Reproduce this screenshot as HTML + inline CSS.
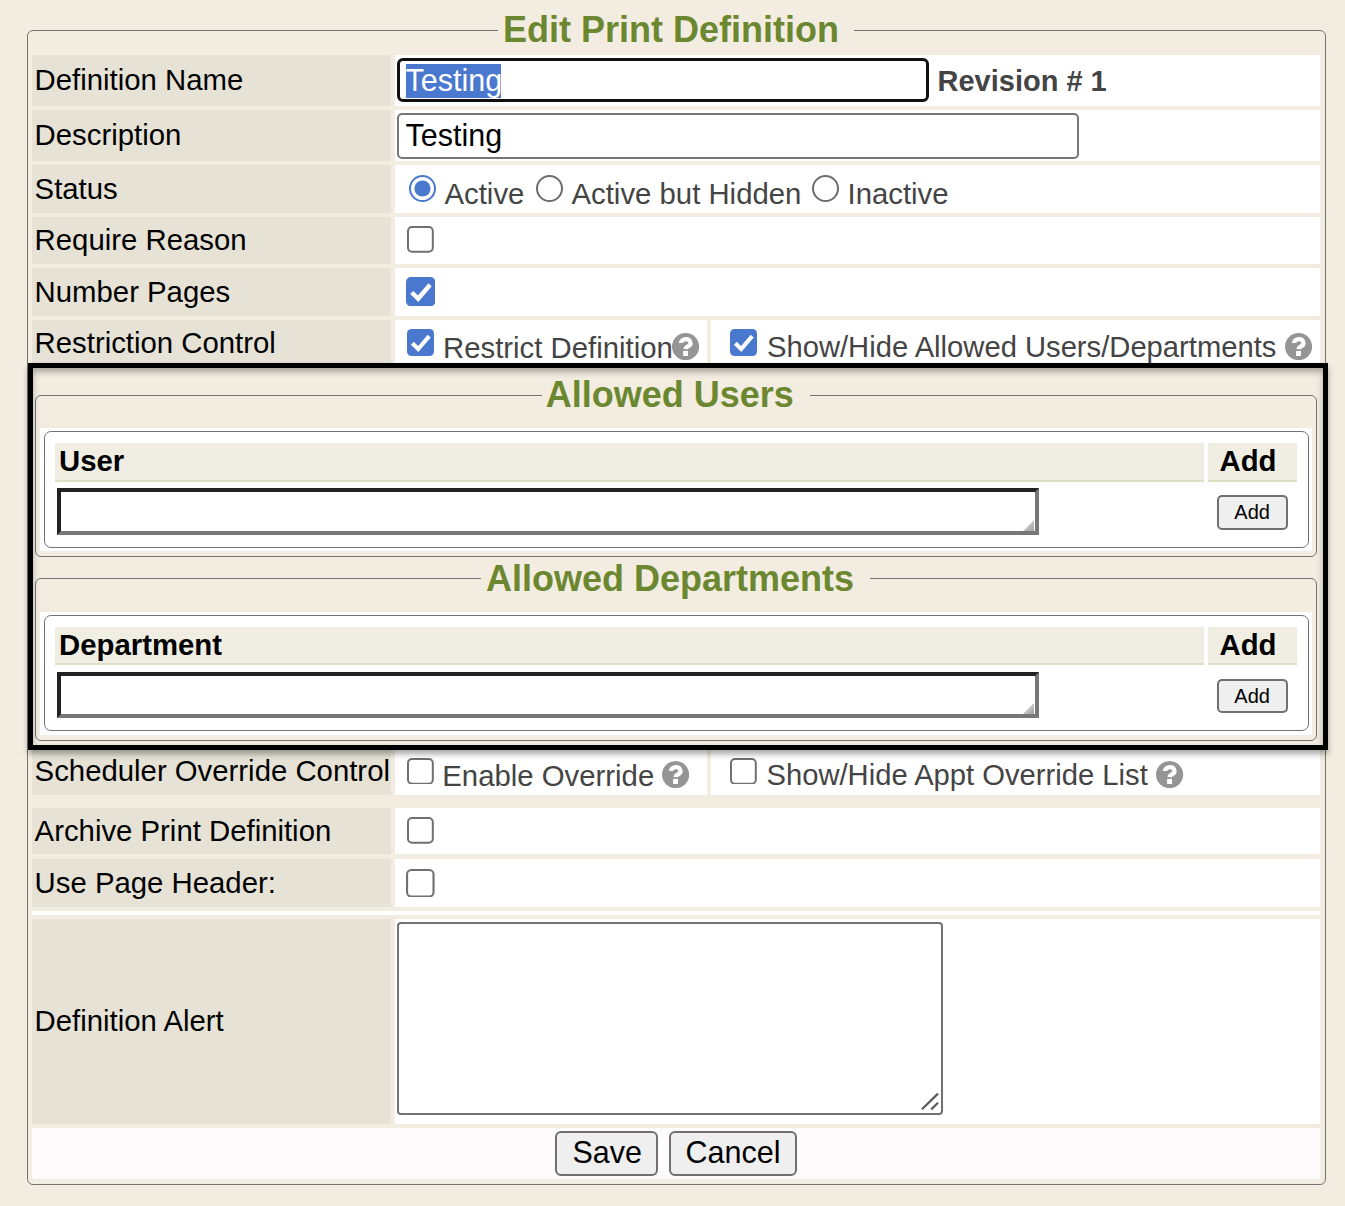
<!DOCTYPE html>
<html><head><meta charset="utf-8"><style>
html,body{margin:0;padding:0;width:1345px;height:1206px;overflow:hidden;background:#F3EDE1;}
body div, body span, body svg{position:absolute;box-sizing:content-box;}
.t{font-family:"Liberation Sans", sans-serif;white-space:nowrap;}
</style></head><body>
<div style="left:26.6px;top:29.6px;width:1297.20px;height:1153.20px;border:1.5px solid #727272;border-radius:6px;"></div>
<div style="left:497.8px;top:20px;width:356.20px;height:22.00px;background:#F3EDE1"></div>
<span class="t" style="left:503.00px;top:12.13px;font-size:36px;line-height:36px;font-weight:bold;color:#6B8730;">Edit Print Definition</span>
<div style="left:32px;top:55px;width:359.00px;height:51.00px;background:#E6E2D6"></div>
<span class="t" style="left:34.60px;top:65.17px;font-size:29.33px;line-height:29.33px;font-weight:normal;color:#000;">Definition Name</span>
<div style="left:32px;top:110px;width:359.00px;height:51.00px;background:#E6E2D6"></div>
<span class="t" style="left:34.60px;top:120.17px;font-size:29.33px;line-height:29.33px;font-weight:normal;color:#000;">Description</span>
<div style="left:32px;top:165px;width:359.00px;height:48.00px;background:#E6E2D6"></div>
<span class="t" style="left:34.60px;top:174.47px;font-size:29.33px;line-height:29.33px;font-weight:normal;color:#000;">Status</span>
<div style="left:32px;top:217px;width:359.00px;height:47.00px;background:#E6E2D6"></div>
<span class="t" style="left:34.60px;top:225.17px;font-size:29.33px;line-height:29.33px;font-weight:normal;color:#000;">Require Reason</span>
<div style="left:32px;top:268px;width:359.00px;height:48.00px;background:#E6E2D6"></div>
<span class="t" style="left:34.60px;top:277.17px;font-size:29.33px;line-height:29.33px;font-weight:normal;color:#000;">Number Pages</span>
<div style="left:32px;top:320px;width:359.00px;height:43.00px;background:#E6E2D6"></div>
<span class="t" style="left:34.60px;top:328.17px;font-size:29.33px;line-height:29.33px;font-weight:normal;color:#000;">Restriction Control</span>
<div style="left:395px;top:55px;width:925.00px;height:51.00px;background:#FFFFFF"></div>
<div style="left:395px;top:110px;width:925.00px;height:51.00px;background:#FFFFFF"></div>
<div style="left:395px;top:165px;width:925.00px;height:48.00px;background:#FFFFFF"></div>
<div style="left:395px;top:217px;width:925.00px;height:47.00px;background:#FFFFFF"></div>
<div style="left:395px;top:268px;width:925.00px;height:48.00px;background:#FFFFFF"></div>
<div style="left:395px;top:320px;width:312.00px;height:43.00px;background:#FFFFFF"></div>
<div style="left:711px;top:320px;width:609.00px;height:43.00px;background:#FFFFFF"></div>
<div style="left:397.2px;top:58px;width:525.8px;height:38.4px;border:3.7px solid #111;border-radius:6px;background:#fff"></div>
<div style="left:406px;top:64.2px;width:95.00px;height:33.80px;background:#4A78CE"></div>
<span class="t" style="left:405.50px;top:65.18px;font-size:30.5px;line-height:30.5px;font-weight:normal;color:#fff;">Testing</span>
<span class="t" style="left:937.50px;top:66.65px;font-size:29px;line-height:29px;font-weight:bold;color:#444444;">Revision # 1</span>
<div style="left:397px;top:113px;width:678px;height:42px;border:2px solid #767676;border-radius:5px;background:#fff"></div>
<span class="t" style="left:405.50px;top:120.48px;font-size:30.5px;line-height:30.5px;font-weight:normal;color:#000;">Testing</span>
<svg style="position:absolute;left:409px;top:175px" width="27" height="27" viewBox="0 0 27 27"><circle cx="13.5" cy="13.5" r="12.5" fill="#fff" stroke="#4A78CE" stroke-width="2"/><circle cx="13.5" cy="13.5" r="8.1" fill="#4A78CE"/></svg>
<span class="t" style="left:444.50px;top:178.77px;font-size:29.33px;line-height:29.33px;font-weight:normal;color:#444444;">Active</span>
<svg style="position:absolute;left:535.9px;top:175px" width="27" height="27" viewBox="0 0 27 27"><circle cx="13.5" cy="13.5" r="12.5" fill="#fff" stroke="#6d6d6d" stroke-width="2"/></svg>
<span class="t" style="left:571.50px;top:178.77px;font-size:29.33px;line-height:29.33px;font-weight:normal;color:#444444;">Active but Hidden</span>
<svg style="position:absolute;left:811.5px;top:175.3px" width="27" height="27" viewBox="0 0 27 27"><circle cx="13.5" cy="13.5" r="12.5" fill="#fff" stroke="#6d6d6d" stroke-width="2"/></svg>
<span class="t" style="left:847.50px;top:178.77px;font-size:29.33px;line-height:29.33px;font-weight:normal;color:#444444;">Inactive</span>
<svg style="position:absolute;left:407.3px;top:226px" width="26.8" height="26.8" viewBox="0 0 27 27"><rect x="1" y="1" width="25" height="25" rx="4" fill="#fff" stroke="#707070" stroke-width="2"/></svg>
<svg style="position:absolute;left:406px;top:277px" width="29.3" height="29.3" viewBox="0 0 27 27"><rect x="0" y="0" width="27" height="27" rx="4.5" fill="#4A78CE"/><path d="M5.3 14.3 L11.2 20 L22.2 7.2" fill="none" stroke="#fff" stroke-width="4.1"/></svg>
<svg style="position:absolute;left:407px;top:329px" width="27" height="27" viewBox="0 0 27 27"><rect x="0" y="0" width="27" height="27" rx="4.5" fill="#4A78CE"/><path d="M5.3 14.3 L11.2 20 L22.2 7.2" fill="none" stroke="#fff" stroke-width="4.1"/></svg>
<span class="t" style="left:443.00px;top:333.17px;font-size:29.33px;line-height:29.33px;font-weight:normal;color:#444444;">Restrict Definition</span>
<svg style="position:absolute;left:671.9px;top:332.9px" width="27.2" height="27.2" viewBox="-13.6 -13.6 27.2 27.2"><circle cx="0" cy="0" r="13.6" fill="#959595"/><path d="M-4.6 -3.6 C-4.4 -8.2 4.8 -9.4 4.9 -3.4 C4.9 0.2 0.2 -0.6 0.1 2.6" fill="none" stroke="#fff" stroke-width="4.4"/><rect x="-2.5" y="4.3" width="4.9" height="5.1" fill="#fff"/></svg>
<svg style="position:absolute;left:730px;top:329px" width="27" height="27" viewBox="0 0 27 27"><rect x="0" y="0" width="27" height="27" rx="4.5" fill="#4A78CE"/><path d="M5.3 14.3 L11.2 20 L22.2 7.2" fill="none" stroke="#fff" stroke-width="4.1"/></svg>
<span class="t" style="left:767.00px;top:332.58px;font-size:29.2px;line-height:29.2px;font-weight:normal;color:#444444;">Show/Hide Allowed Users/Departments</span>
<svg style="position:absolute;left:1285px;top:333px" width="27.2" height="27.2" viewBox="-13.6 -13.6 27.2 27.2"><circle cx="0" cy="0" r="13.6" fill="#959595"/><path d="M-4.6 -3.6 C-4.4 -8.2 4.8 -9.4 4.9 -3.4 C4.9 0.2 0.2 -0.6 0.1 2.6" fill="none" stroke="#fff" stroke-width="4.4"/><rect x="-2.5" y="4.3" width="4.9" height="5.1" fill="#fff"/></svg>
<div style="left:35.2px;top:394.55px;width:1280.10px;height:160.35px;border:1.5px solid #727272;border-radius:6px;"></div>
<div style="left:541.6px;top:385.3px;width:268.40px;height:20.00px;background:#F3EDE1"></div>
<span class="t" style="left:545.80px;top:376.83px;font-size:36px;line-height:36px;font-weight:bold;color:#6B8730;">Allowed Users</span>
<div style="left:40px;top:428.3px;width:1271.60px;height:123.10px;background:#fff"></div>
<div style="left:44.2px;top:430.8px;width:1262.90px;height:114.80px;border:1.5px solid #727272;border-radius:7px;"></div>
<div style="left:55px;top:443.2px;width:1149.00px;height:38.40px;background:#F0EEE2;border-bottom:2px solid #DEDEC4;box-sizing:border-box"></div>
<div style="left:1208.3px;top:443.2px;width:88.70px;height:38.40px;background:#F0EEE2;border-bottom:2px solid #DEDEC4;box-sizing:border-box"></div>
<span class="t" style="left:59.00px;top:446.17px;font-size:29.33px;line-height:29.33px;font-weight:bold;color:#000;">User</span>
<span class="t" style="left:1219.50px;top:446.47px;font-size:29.33px;line-height:29.33px;font-weight:bold;color:#000;">Add</span>
<div style="left:57px;top:488.00px;width:981.5px;height:46.5px;box-sizing:border-box;border:4px solid;border-color:#222 #777 #777 #222;background:#fff"></div>
<svg style="position:absolute;left:1023px;top:519.50px" width="11" height="11"><defs><linearGradient id="g395" x1="0" y1="0" x2="1" y2="1"><stop offset="0" stop-color="#e8e8e8"/><stop offset="1" stop-color="#a0a0a0"/></linearGradient></defs><path d="M11 0 L11 11 L0 11 Z" fill="url(#g395)"/></svg>
<div style="left:1217px;top:495.00px;width:70.5px;height:34.5px;box-sizing:border-box;border:2px solid #707070;border-radius:5px;background:#EFEFEF"></div>
<span class="t" style="left:1234.30px;top:501.87px;font-size:20px;line-height:20px;font-weight:normal;color:#000;">Add</span>
<div style="left:35.2px;top:578.25px;width:1280.10px;height:160.35px;border:1.5px solid #727272;border-radius:6px;"></div>
<div style="left:481.3px;top:569.0px;width:389.20px;height:20.00px;background:#F3EDE1"></div>
<span class="t" style="left:486.00px;top:560.53px;font-size:36px;line-height:36px;font-weight:bold;color:#6B8730;">Allowed Departments</span>
<div style="left:40px;top:612.0px;width:1271.60px;height:123.10px;background:#fff"></div>
<div style="left:44.2px;top:614.5px;width:1262.90px;height:114.80px;border:1.5px solid #727272;border-radius:7px;"></div>
<div style="left:55px;top:626.9px;width:1149.00px;height:38.40px;background:#F0EEE2;border-bottom:2px solid #DEDEC4;box-sizing:border-box"></div>
<div style="left:1208.3px;top:626.9px;width:88.70px;height:38.40px;background:#F0EEE2;border-bottom:2px solid #DEDEC4;box-sizing:border-box"></div>
<span class="t" style="left:59.00px;top:629.87px;font-size:29.33px;line-height:29.33px;font-weight:bold;color:#000;">Department</span>
<span class="t" style="left:1219.50px;top:630.17px;font-size:29.33px;line-height:29.33px;font-weight:bold;color:#000;">Add</span>
<div style="left:57px;top:671.70px;width:981.5px;height:46.5px;box-sizing:border-box;border:4px solid;border-color:#222 #777 #777 #222;background:#fff"></div>
<svg style="position:absolute;left:1023px;top:703.20px" width="11" height="11"><defs><linearGradient id="g579" x1="0" y1="0" x2="1" y2="1"><stop offset="0" stop-color="#e8e8e8"/><stop offset="1" stop-color="#a0a0a0"/></linearGradient></defs><path d="M11 0 L11 11 L0 11 Z" fill="url(#g579)"/></svg>
<div style="left:1217px;top:678.70px;width:70.5px;height:34.5px;box-sizing:border-box;border:2px solid #707070;border-radius:5px;background:#EFEFEF"></div>
<span class="t" style="left:1234.30px;top:685.57px;font-size:20px;line-height:20px;font-weight:normal;color:#000;">Add</span>
<div style="left:32px;top:750px;width:359.00px;height:44.50px;background:#E6E2D6"></div>
<span class="t" style="left:34.60px;top:755.97px;font-size:29.33px;line-height:29.33px;font-weight:normal;color:#000;">Scheduler Override Control</span>
<div style="left:395px;top:750px;width:312.00px;height:44.60px;background:#FFFFFF"></div>
<div style="left:711px;top:750px;width:609.00px;height:44.60px;background:#FFFFFF"></div>
<svg style="position:absolute;left:407.3px;top:757.5px" width="26.8" height="26.8" viewBox="0 0 27 27"><rect x="1" y="1" width="25" height="25" rx="4" fill="#fff" stroke="#707070" stroke-width="2"/></svg>
<span class="t" style="left:442.30px;top:761.17px;font-size:29.33px;line-height:29.33px;font-weight:normal;color:#444444;">Enable Override</span>
<svg style="position:absolute;left:661.8px;top:761px" width="27.2" height="27.2" viewBox="-13.6 -13.6 27.2 27.2"><circle cx="0" cy="0" r="13.6" fill="#959595"/><path d="M-4.6 -3.6 C-4.4 -8.2 4.8 -9.4 4.9 -3.4 C4.9 0.2 0.2 -0.6 0.1 2.6" fill="none" stroke="#fff" stroke-width="4.4"/><rect x="-2.5" y="4.3" width="4.9" height="5.1" fill="#fff"/></svg>
<svg style="position:absolute;left:730px;top:757.5px" width="26.8" height="26.8" viewBox="0 0 27 27"><rect x="1" y="1" width="25" height="25" rx="4" fill="#fff" stroke="#707070" stroke-width="2"/></svg>
<span class="t" style="left:766.50px;top:761.28px;font-size:29.2px;line-height:29.2px;font-weight:normal;color:#444444;">Show/Hide Appt Override List</span>
<svg style="position:absolute;left:1156.4px;top:761px" width="27.2" height="27.2" viewBox="-13.6 -13.6 27.2 27.2"><circle cx="0" cy="0" r="13.6" fill="#959595"/><path d="M-4.6 -3.6 C-4.4 -8.2 4.8 -9.4 4.9 -3.4 C4.9 0.2 0.2 -0.6 0.1 2.6" fill="none" stroke="#fff" stroke-width="4.4"/><rect x="-2.5" y="4.3" width="4.9" height="5.1" fill="#fff"/></svg>
<div style="left:32px;top:808px;width:359.00px;height:46.40px;background:#E6E2D6"></div>
<div style="left:395px;top:808px;width:925.00px;height:46.40px;background:#FFFFFF"></div>
<span class="t" style="left:34.60px;top:816.17px;font-size:29.33px;line-height:29.33px;font-weight:normal;color:#000;">Archive Print Definition</span>
<svg style="position:absolute;left:407.3px;top:817px" width="26.8" height="26.8" viewBox="0 0 27 27"><rect x="1" y="1" width="25" height="25" rx="4" fill="#fff" stroke="#707070" stroke-width="2"/></svg>
<div style="left:32px;top:859.2px;width:359.00px;height:47.50px;background:#E6E2D6"></div>
<div style="left:395px;top:859.2px;width:925.00px;height:47.50px;background:#FFFFFF"></div>
<span class="t" style="left:34.60px;top:867.67px;font-size:29.33px;line-height:29.33px;font-weight:normal;color:#000;">Use Page Header:</span>
<svg style="position:absolute;left:406.3px;top:868.5px" width="28.6" height="28.6" viewBox="0 0 27 27"><rect x="1" y="1" width="25" height="25" rx="4" fill="#fff" stroke="#707070" stroke-width="2"/></svg>
<div style="left:32px;top:910.8px;width:1288.00px;height:4.00px;background:#fff"></div>
<div style="left:32px;top:918.7px;width:359.00px;height:205.30px;background:#E6E2D6"></div>
<div style="left:395px;top:918.7px;width:925.00px;height:205.30px;background:#FFFFFF"></div>
<span class="t" style="left:34.60px;top:1005.87px;font-size:29.33px;line-height:29.33px;font-weight:normal;color:#000;">Definition Alert</span>
<div style="left:397px;top:922.3px;width:542.3px;height:189px;border:2px solid #727272;border-radius:4px;background:#fff"></div>
<svg style="position:absolute;left:918px;top:1090px" width="24" height="24"><path d="M3.9 19.2 L20 3.6 M13.2 19.4 L20 12.8" stroke="#5a5a5a" stroke-width="2.2"/></svg>
<div style="left:32px;top:1128px;width:1288.00px;height:51.00px;background:#FDFBFB"></div>
<div style="left:555.3px;top:1130.5px;width:102.4px;height:45.8px;box-sizing:border-box;border:2px solid #707070;border-radius:6px;background:#EFEFEF"></div>
<div style="left:669.4px;top:1130.5px;width:127.4px;height:45.8px;box-sizing:border-box;border:2px solid #707070;border-radius:6px;background:#EFEFEF"></div>
<span class="t" style="left:572.50px;top:1137.28px;font-size:30.5px;line-height:30.5px;font-weight:normal;color:#000;">Save</span>
<span class="t" style="left:685.60px;top:1137.28px;font-size:30.5px;line-height:30.5px;font-weight:normal;color:#000;">Cancel</span>
<div style="left:28px;top:363px;width:1290.3px;height:377px;border:5px solid #000;box-shadow:0 4px 6px rgba(0,0,0,.35), inset 0 4px 6px rgba(0,0,0,.3)"></div>
</body></html>
